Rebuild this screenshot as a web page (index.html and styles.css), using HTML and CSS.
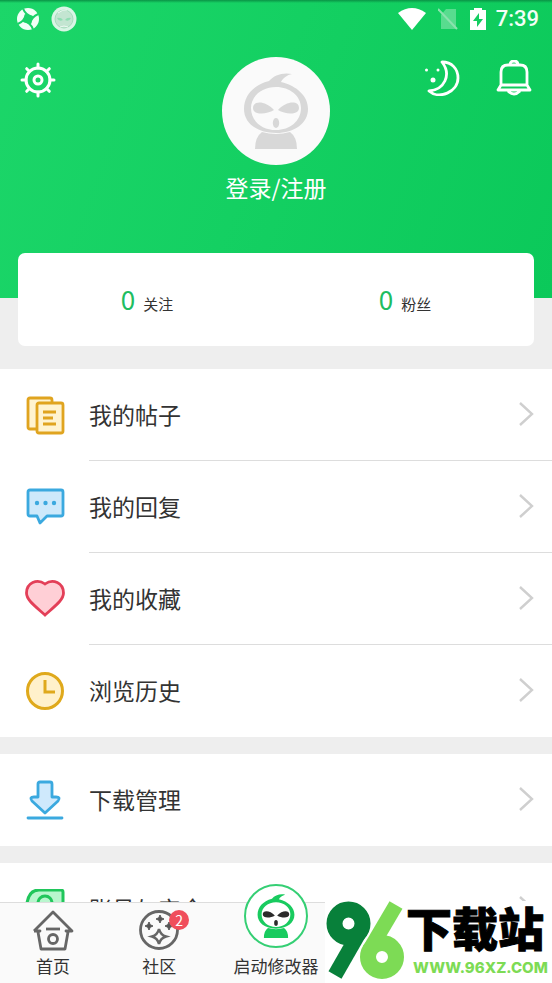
FILE: index.html
```
<!DOCTYPE html>
<html lang="zh-CN">
<head>
<meta charset="utf-8">
<meta name="viewport" content="width=device-width, initial-scale=1">
<title>我的</title>
<link rel="stylesheet" href="styles.css">
</head>
<body>
<svg class="defs" aria-hidden="true">
  <symbol id="chevron" viewBox="0 0 16 26"><path d="M2 2l12 11L2 24" fill="none" stroke="#cfcfcf" stroke-width="2.4"/></symbol>
  <symbol id="mascot" viewBox="0 0 66 78">
    <path fill-rule="evenodd" d="M49 2C40 0 31 3 26 9C10 13 1 24 1 37C1 51 14 61 33 61C52 61 65 51 65 37C65 24 54 14 38 10C40 6 44 3 49 2ZM33 15C47 15 58 24 58 36C58 49 47 58 33 58C19 58 8 49 8 36C8 24 19 15 33 15Z"/>
    <path d="M19 60Q33 64 47 60Q54 65 54 77H12Q12 65 19 60Z"/>
    <g class="mascot-face"><path d="M31 38C23 43 10 43 10 36C10 28 23 29 31 38ZM35 38C43 43 56 43 56 36C56 28 43 29 35 38Z"/><ellipse cx="33" cy="51" rx="3.2" ry="5"/></g>
  </symbol>
</svg>
<div class="app">
  <main class="content">
    <header class="hero">
      <div class="status">
        <svg width="22" height="22" viewBox="0 0 22 22" aria-hidden="true"><circle cx="11" cy="11" r="11" fill="#f2fff7"/><g transform="rotate(12 11 11)" fill="none" stroke="#1ad268" stroke-width="2"><path d="M7 7h8v8H7z" fill="#1ad268" stroke="none"/><path d="M15 8Q8 8 4 2M14 15Q14 8 20 4M7 14Q14 14 18 20M8 7Q8 14 2 18"/></g></svg>
        <svg class="status-app" width="26" height="26" viewBox="0 0 26 26" aria-hidden="true"><circle cx="13" cy="13" r="12.5" fill="#d9f5e5"/><circle cx="13" cy="13" r="9" fill="#c3e5d1" stroke="#a5dcbc"/><path d="M6 12q4-1 6 2q-4 2-6-2zm14 0q-4-1-6 2q4 2 6-2z" fill="#91ddb3"/><path d="M7 7q5-4 9-3M9 21q4-2 8 0" stroke="#edf9f2" fill="none"/></svg>
        <span class="grow"></span>
        <svg width="28" height="22" viewBox="0 0 28 22" aria-hidden="true"><path d="M14 22L0 5Q14-5 28 5Z" fill="#fff"/></svg>
        <svg class="status-sim" width="20" height="22" viewBox="0 0 20 22" aria-hidden="true"><path d="M3 7L8 1H18V21H3Z" fill="#fff" opacity=".3"/><path d="M0 1L19 21" stroke="#8be2ae" stroke-width="2"/></svg>
        <svg width="16" height="22" viewBox="0 0 16 22" aria-hidden="true"><path d="M4 2V0h8v2h4v20H0V2z" fill="#fff"/><path d="M9 5L3 13h4v6l6-8H9z" fill="#13cd60"/></svg>
        <span class="time">7:39</span>
      </div>
      <div class="hero-main">
        <button class="icon-button settings" aria-label="设置"><svg width="36" height="36" viewBox="0 0 36 36" fill="none" stroke="#fff" stroke-width="3" stroke-linecap="round"><circle cx="18" cy="18" r="12"/><circle cx="18" cy="18" r="4"/><path d="M18 2v4M18 30v4M2 18h4M30 18h4M6.7 6.7l2.8 2.8M26.5 26.5l2.8 2.8M6.7 29.3l2.8-2.8M26.5 9.5l2.8-2.8"/></svg></button>
        <a class="profile" href="#login">
          <span class="avatar"><svg width="66" height="78"><use href="#mascot"/></svg></span>
          <span class="login">登录/注册</span>
        </a>
        <div class="actions">
          <button class="icon-button" aria-label="夜间模式"><svg width="36" height="36" viewBox="0 0 36 36"><path d="M18 2C28 2 34 9 34 18C34 32 15 40 5 31C20 30 28 15 18 2Z" fill="none" stroke="#fff" stroke-width="2.8" stroke-linejoin="round"/><g fill="#fff"><circle cx="9" cy="20" r="2.5"/><circle cx="2.500" cy="10" r="1.500"/><circle cx="14" cy="10" r="1.500"/></g></svg></button>
          <button class="icon-button" aria-label="通知"><svg width="36" height="36" viewBox="0 0 36 36" fill="none" stroke="#fff" stroke-width="2.8" stroke-linejoin="round"><path d="M5 25V12Q5 5 12 5H24Q31 5 31 12V25L34 30H2ZM5 25H31M14 5Q14 1 18 1Q22 1 22 5M12 31Q18 37 24 31"/></svg></button>
        </div>
      </div>
    </header>
    <section class="stats">
      <a href="#following"><strong>0</strong><span>关注</span></a>
      <a href="#followers"><strong>0</strong><span>粉丝</span></a>
    </section>
    <nav class="group" aria-label="我的内容">
      <a class="row" href="#posts"><svg class="row-icon" viewBox="0 0 40 40" fill="#fff3d0" stroke="#e0a41f" stroke-width="2.8" stroke-linejoin="round"><path d="M12 34H5Q3 34 3 32V5Q3 3 5 3H25Q27 3 27 5V8"/><rect x="12" y="8" width="26" height="30" rx="2"/><path d="M18 17h13M18 23h10M18 29h13"/></svg><span class="row-body">我的帖子<svg class="chevron"><use href="#chevron"/></svg></span></a>
      <a class="row" href="#replies"><svg class="row-icon" viewBox="0 0 40 40" fill="#cde9fb" stroke="#3ba9df" stroke-width="2.8" stroke-linejoin="round"><path d="M5 3H36Q38 3 38 5V27Q38 29 36 29H22L15 36L12 29H5Q3 29 3 27V5Q3 3 5 3Z"/><g fill="#3ba9df" stroke="none"><circle cx="12" cy="16" r="2.200"/><circle cx="20.500" cy="16" r="2.200"/><circle cx="29" cy="16" r="2.200"/></g></svg><span class="row-body">我的回复<svg class="chevron"><use href="#chevron"/></svg></span></a>
      <a class="row" href="#favorites"><svg class="row-icon" viewBox="0 0 40 40"><path d="M20 5C12-1 1.500 4 1.500 14C1.500 21 10 27 20 36C30 27 38.500 21 38.500 14C38.500 4 28-1 20 5Z" fill="#ffcfd6" stroke="#e33f58" stroke-width="2.8"/></svg><span class="row-body">我的收藏<svg class="chevron"><use href="#chevron"/></svg></span></a>
      <a class="row" href="#history"><svg class="row-icon" viewBox="0 0 40 40" fill="#fff1cb" stroke="#dfa91c" stroke-width="3"><circle cx="20" cy="20" r="17.500"/><path d="M20 9v12h10" fill="none"/></svg><span class="row-body">浏览历史<svg class="chevron"><use href="#chevron"/></svg></span></a>
    </nav>
    <nav class="group" aria-label="下载">
      <a class="row" href="#downloads"><svg class="row-icon" viewBox="0 0 40 40" fill="#cfe9fc" stroke="#3ba9df" stroke-width="2.800" stroke-linejoin="round" stroke-linecap="round"><path d="M13 4Q13 2 15 2H25Q27 2 27 4V17H31Q36 17 33 21L20 33L7 21Q4 17 9 17H13Z"/><path d="M3 38H37"/></svg><span class="row-body">下载管理<svg class="chevron"><use href="#chevron"/></svg></span></a>
    </nav>
    <nav class="group" aria-label="账号">
      <a class="row" href="#account"><svg class="row-icon" viewBox="0 0 40 40" fill="#b9f6ce" stroke="#20c65b" stroke-width="3"><path d="M14 1H36Q38 1 38 3V37H2V14Q4 1 14 1Z"/><circle cx="20" cy="14" r="7"/></svg><span class="row-body">账号与安全<svg class="chevron"><use href="#chevron"/></svg></span></a>
    </nav>
  </main>
  <nav class="tabs" aria-label="主导航">
    <a class="tab" href="#home"><svg width="42" height="42" viewBox="0 0 42 42" fill="none" stroke="#666" stroke-width="2.800"><path d="M2 22L21 3L40 22H34L36 23L33 40H9L6 23L8 22H2" stroke-linejoin="round"/><path d="M14 20H28"/><circle cx="21" cy="30" r="4.500"/></svg><span>首页</span></a>
    <a class="tab" href="#community"><span class="tab-icon"><svg width="42" height="42" viewBox="0 0 42 42"><circle cx="21" cy="21" r="18.500" fill="none" stroke="#666" stroke-width="2.800"/><path id="star" d="M22 6Q22.500 9.500 26 10Q22.500 10.500 22 14Q21.500 10.500 18 10Q21.500 9.500 22 6Z" fill="#555" stroke="#555"/><use href="#star" x="-11" y="7"/><use href="#star" x="9" y="7"/><path d="M21 20Q22.500 26 28 27.500Q22.500 29 21 35Q19.500 29 14 27.500Q19.500 26 21 20Z" fill="none" stroke="#666" stroke-width="2.500"/></svg><b class="badge">2</b></span><span>社区</span></a>
    <a class="tab" href="#launch"><span class="launch"><svg width="38" height="46"><use href="#mascot"/></svg></span><span>启动修改器</span></a>
  </nav>
  <aside class="watermark">
    <svg width="80" height="80" viewBox="0 0 80 80" role="img" aria-label="96"><g fill="none"><path d="M34.500 29.500L9 74" stroke="#08803a" stroke-width="15"/><circle cx="22.500" cy="22.500" r="14" stroke="#08803a" stroke-width="16"/><path d="M70 5L43.500 49" stroke="#fff" stroke-width="18"/><circle cx="56" cy="56" r="23" fill="#fff"/><path d="M70 4L43.500 49" stroke="#7ddb55" stroke-width="15"/><circle cx="56" cy="56" r="14" stroke="#7ddb55" stroke-width="16"/></g></svg>
    <div class="watermark-text"><span class="watermark-name">下载站</span><span class="watermark-url">WWW.96XZ.COM</span></div>
  </aside>
</div>
</body>
</html>
```
FILE: styles.css
```
* { box-sizing: border-box; }
body {
  margin: 0;
  font-family: "Noto Sans CJK SC", sans-serif;
  color: #333;
  background: #eee;
}
a { color: inherit; text-decoration: none; }
svg { display: block; flex: none; }
.defs { position: absolute; width: 0; height: 0; }
.app {
  position: relative;
  display: flex;
  flex-direction: column;
  height: 100vh;
  overflow: hidden;
}
.content {
  flex: 1;
  min-height: 0;
  overflow-y: auto;
  scrollbar-width: none;
}
.hero {
  height: 298px;
  background: linear-gradient(#0a9446, transparent 3px), linear-gradient(110deg, #1cd669, #0bc95a);
}
.status {
  display: flex;
  align-items: center;
  height: 38px;
  padding: 0 13px 0 17px;
}
.status-app { margin-left: 12px; }
.grow { flex: 1; }
.status-sim { margin: 0 12px 0 12px; }
.time {
  margin-left: 10px;
  font: 500 22px/22px Roboto, sans-serif;
  color: #f2fff7;
}
.hero-main {
  display: grid;
  grid-template-columns: 1fr auto 1fr;
  align-items: start;
  padding: 19px 20px 0;
}
.icon-button { border: 0; padding: 0; background: none; }
.settings { justify-self: start; margin-top: 5px; }
.actions { display: flex; justify-content: flex-end; gap: 36px; margin-top: 3px; }
.profile { display: flex; flex-direction: column; align-items: center; color: #fff; }
.avatar {
  display: grid;
  place-items: center;
  width: 108px;
  height: 108px;
  border-radius: 50%;
  background: #fafafa;
  fill: #d8d8d8;
}
.login { margin-top: 5px; font-size: 23px; line-height: 34px; }
.stats {
  position: relative;
  display: grid;
  grid-template-columns: 1fr 1fr;
  height: 93px;
  margin: -45px 18px 23px;
  border-radius: 7px;
  background: #fff;
}
.stats a { display: flex; justify-content: center; align-items: baseline; gap: 8px; padding-top: 26px; }
.stats strong { font-size: 26px; line-height: 40px; font-weight: 400; color: #20bd61; }
.stats span { font-size: 15px; }
.group { margin-bottom: 17px; background: #fff; }
.row { display: flex; align-items: center; padding-left: 25px; }
.row-icon { width: 40px; height: 40px; }
.row-body {
  flex: 1;
  display: flex;
  align-items: center;
  justify-content: space-between;
  height: 92px;
  margin-left: 24px;
  padding: 0 18px 2px 0;
  font-size: 23px;
  border-bottom: 1px solid #ddd;
}
.row:last-child .row-body { border-bottom-color: transparent; }
.chevron { width: 16px; height: 26px; }
.tabs {
  position: relative;
  display: grid;
  grid-template-columns: 1fr 1fr 1.2fr 1fr 1fr;
  grid-template-rows: minmax(0, 1fr);
  height: 81px;
  border-top: 1px solid #ddd;
  background: #fafafa;
}
.tab {
  display: flex;
  flex-direction: column;
  align-items: center;
  justify-content: flex-end;
  gap: 2px;
  padding-bottom: 5px;
  font-size: 17px;
  line-height: 25px;
  white-space: nowrap;
}
.tab-icon { position: relative; }
.badge {
  position: absolute;
  top: 1px;
  right: -9px;
  width: 20px;
  height: 20px;
  border-radius: 50%;
  background: #f04e5c;
  color: #fff;
  font-size: 14px;
  font-weight: 400;
  line-height: 20px;
  text-align: center;
}
.launch {
  display: grid;
  flex: none;
  place-items: center;
  width: 64px;
  height: 64px;
  margin-bottom: 3px;
  border: 2px solid #35cf74;
  border-radius: 50%;
  background: #fff;
  fill: #19cb5f;
}
.launch svg { --face: #2b2b2b; }
.mascot-face { fill: var(--face, #d8d8d8); }
.watermark {
  position: absolute;
  right: 0;
  bottom: 0;
  display: flex;
  width: 227px;
  height: 82px;
  padding-left: 1px;
  background: #fff;
}
.watermark-text { display: flex; flex-direction: column; white-space: nowrap; }
.watermark-name {
  font-size: 46px;
  font-weight: 900;
  line-height: 50px;
  color: #000;
  -webkit-text-stroke: 1px #000;
}
.watermark-url {
  padding-left: 7px;
  font: 800 15px/34px Inter, sans-serif;
  color: #7ddb55;
}
```
